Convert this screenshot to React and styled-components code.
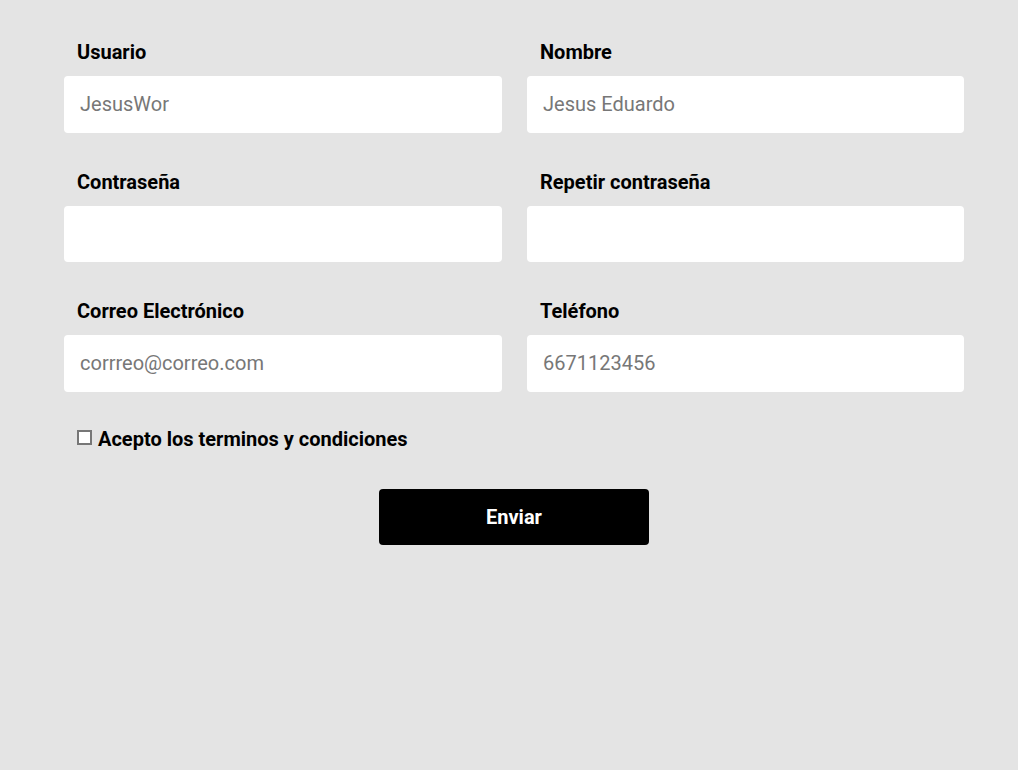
import React from "react";
import styled, { createGlobalStyle } from "styled-components";

const Global = createGlobalStyle`
  html, body {
    margin: 0;
    padding: 0;
    background: #e4e4e4;
    font-family: Roboto, "Liberation Sans", sans-serif;
  }
`;

const Page = styled.div`
  min-height: 770px;
  padding: 40px 54px 0 64px;
  box-sizing: border-box;
`;

const Form = styled.form`
  width: 900px;
  display: flex;
  flex-direction: column;
`;

const Grid = styled.div`
  display: grid;
  grid-template-columns: 438px 437px;
  column-gap: 25px;
  row-gap: 37px;
`;

const Field = styled.div`
  display: flex;
  flex-direction: column;
`;

const Label = styled.label`
  font-size: 20px;
  font-weight: 700;
  color: #000;
  padding-left: 13px;
  line-height: 24px;
  margin-bottom: 12px;
`;

const Input = styled.input`
  height: 56.5px;
  border: none;
  border-radius: 4px;
  background: #fff;
  padding: 0 16px;
  font-family: inherit;
  font-size: 20px;
  color: #000;
  box-sizing: border-box;
  outline: none;

  &::placeholder {
    color: #777;
  }
`;

const Terms = styled.label`
  display: flex;
  align-items: center;
  gap: 6px;
  margin-top: 35px;
  padding-left: 13px;
  font-size: 20px;
  font-weight: 700;
  color: #000;
  line-height: 24px;
`;

const Box = styled.span`
  width: 11px;
  height: 11px;
  border: 2px solid #777;
  background: #fff;
  margin-top: -3px;
`;

const Button = styled.button`
  align-self: center;
  width: 270px;
  height: 56px;
  margin-top: 38px;
  border: none;
  border-radius: 4px;
  background: #000;
  color: #fff;
  font-family: inherit;
  font-size: 20px;
  font-weight: 700;
  cursor: pointer;
`;

const fields = [
  { label: "Usuario", placeholder: "JesusWor" },
  { label: "Nombre", placeholder: "Jesus Eduardo" },
  { label: "Contraseña", placeholder: "", type: "password" },
  { label: "Repetir contraseña", placeholder: "", type: "password" },
  { label: "Correo Electrónico", placeholder: "corrreo@correo.com", type: "email" },
  { label: "Teléfono", placeholder: "6671123456", type: "tel" },
];

export default function App() {
  return (
    <Page>
      <Global />
      <Form onSubmit={(e) => e.preventDefault()}>
        <Grid>
          {fields.map((f) => (
            <Field key={f.label}>
              <Label>{f.label}</Label>
              <Input type={f.type || "text"} placeholder={f.placeholder} />
            </Field>
          ))}
        </Grid>
        <Terms>
          <Box />
          Acepto los terminos y condiciones
        </Terms>
        <Button type="submit">Enviar</Button>
      </Form>
    </Page>
  );
}
